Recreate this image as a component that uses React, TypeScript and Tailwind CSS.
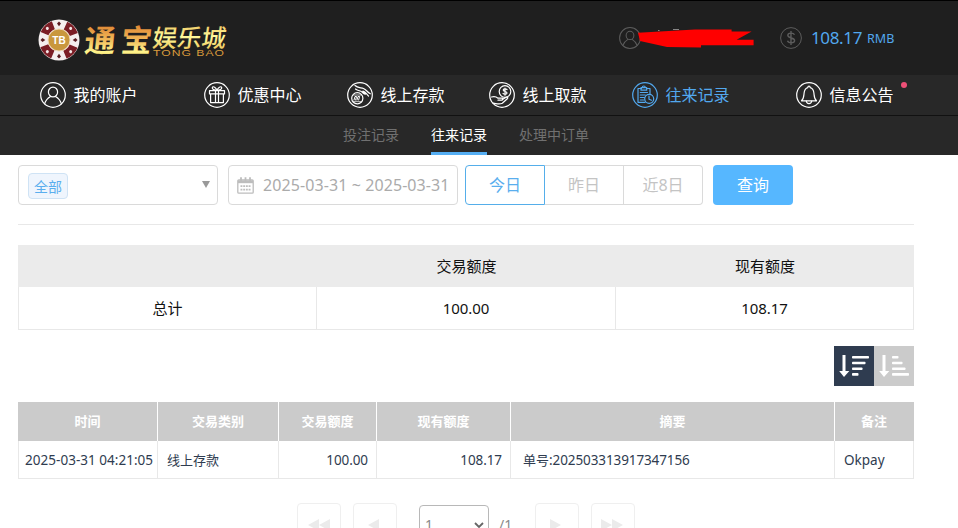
import React, { useState } from "react";

const Ring = ({ children }: { children: React.ReactNode }) => (
  <svg
    width="26"
    height="26"
    viewBox="0 0 26 26"
    fill="none"
    stroke="currentColor"
    strokeWidth="1.2"
    strokeLinecap="round"
    strokeLinejoin="round"
    className="shrink-0"
  >
    <circle cx="13" cy="13" r="12.3" />
    {children}
  </svg>
);

const UserIcon = () => (
  <Ring>
    <ellipse cx="13" cy="10" rx="4.6" ry="4.9" />
    <path d="M4.6 21.8c1-3.6 3-5.4 5.9-7.2M21.4 21.8c-1-3.6-3-5.4-5.9-7.2" />
  </Ring>
);

const GiftIcon = () => (
  <Ring>
    <path d="M5.5 8.7h15v3.2h-15zM6.6 12v8.6h12.8V12M11.5 8.7v11.9M14.5 8.7v11.9" />
    <path d="M12.8 8.4C11 8.2 7.8 7.6 8.3 5.5c.7-2 4 .2 4.5 2.9M13.2 8.4c1.8-.2 5-.8 4.5-2.9-.7-2-4 .2-4.5 2.9" />
  </Ring>
);

const DepositIcon = () => (
  <Ring>
    <circle cx="10.300" cy="16.300" r="5.600" />
    <path d="M7 18l1-3.500h1.600l-1 3.500M10 18l1-3.500h1.600l-1 3.500" strokeWidth="1" />
    <path d="M6.500 13h7.600M6.500 19.600h7.600" strokeWidth=".7" />
    <path d="M8 3.500c2.500 2.500 6 2 8.500 3 3 1.200 3.500 3.600 6.800 5.300" />
    <path d="M8.500 7c2.500 2 5 1.500 6.300 2.800 1.500 1.400 1.600 2.600 3.600 2.300l-2.500-3c3 .5 3.500 3.200 5.600 4.900" />
  </Ring>
);

const WithdrawIcon = () => (
  <Ring>
    <circle cx="16" cy="9.5" r="5.8" />
    <path d="M18 7.500c-1-1-3.800-1-3.800.6 0 1.800 3.800 1 3.800 2.900 0 1.500-3 1.500-4 .4M16 6v7.200" />
    <path d="M2.500 15c2.500-.7 4.500-.6 6.500 1.200h4c1.500.3 1 2-.4 2H9M13.500 17.500l3.600-2.300c1.500-.7 2.300.6 1.200 1.500l-5 4.500c-3 1.500-6 .2-9.300 0" />
  </Ring>
);

const RecordIcon = () => (
  <Ring>
    <path d="M9.500 6.500H6v13.800h7M14.500 6.500H18v5.300M9 5.600h5.700v2.600H9zM10.300 5.500c0-2 3-2 3 0M8.300 10.500h7.200M8.300 13h5M8.300 15.500h4M8.300 18h3.500" />
    <circle cx="17.200" cy="16.800" r="4.500" />
    <path d="M17 14v3.200l2.500 1" />
  </Ring>
);

const BellIcon = () => (
  <Ring>
    <path d="M5.500 18.800c2.400-2 2.200-4.600 2.600-7.800.3-3 1.900-5 3.700-5.400.1-2.100 2.300-2.100 2.400 0 1.800.4 3.400 2.400 3.700 5.400.4 3.200.2 5.800 2.600 7.800z" />
    <path d="M10.300 19c.3 3.400 5.100 3.400 5.400 0" />
  </Ring>
);

const CalendarIcon = () => (
  <svg width="17" height="17" viewBox="0 0 17 17" fill="none" stroke="#bdbdbd">
    <rect x=".8" y="2.800" width="15.400" height="13.400" rx="1" strokeWidth="1.300" />
    <path d="M1 4.700h15" strokeWidth="3" />
    <path d="M4 .3v4M8.500 .3v4M13 .3v4" strokeWidth="1.800" />
    <path d="M3.500 9.200h10M3.500 12.600h10" strokeWidth="1.800" strokeDasharray="1.900 .8" />
  </svg>
);

const SortIcon = ({ widths }: { widths: number[] }) => (
  <svg width="30" height="24" viewBox="0 0 30 24" fill="#fff">
    <path d="M3.500 1h3v16h3.800L5 23 .2 17h3.300z" />
    {widths.map((w, i) => (
      <rect key={i} x="13" y={2 + i * 5.700} width={w} height="2.600" rx=".8" />
    ))}
  </svg>
);

const Logo = () => (
  <svg width="200" height="50" viewBox="0 0 200 50">
    <defs>
      <linearGradient id="gold" x1="0" y1="0" x2="0" y2="1">
        <stop offset="0.2" stopColor="#df8734" />
        <stop offset="0.5" stopColor="#f0b455" />
        <stop offset="0.8" stopColor="#fff58c" />
        <stop offset="1" stopColor="#d59b32" />
      </linearGradient>
      <linearGradient id="pale" x1="0" y1="0" x2="0" y2="1">
        <stop offset="0" stopColor="#e6ad45" />
        <stop offset="0.5" stopColor="#fffb9c" />
        <stop offset="1" stopColor="#e5b544" />
      </linearGradient>
    </defs>
    <circle cx="24" cy="25" r="20.500" fill="#f4eeee" />
    <circle
      cx="24"
      cy="25"
      r="15.800"
      fill="none"
      stroke="#7b1d25"
      strokeWidth="8.500"
      strokeDasharray="12.409 12.409"
      strokeDashoffset="-6.200"
    />
    <circle cx="24" cy="25" r="11" fill="#c9973d" stroke="#eed8ba" />
    {[0, 90, 180, 270].map((a) => (
      <path key={a} d="M24 6.500l2 2-2 2.800-2-2.800z" fill="#5a1b20" transform={`rotate(${a} 24 25)`} />
    ))}
    {[45, 135, 225, 315].map((a) => (
      <circle key={a} cx="24" cy="8.500" r="1.500" fill="#f5e8e8" transform={`rotate(${a} 24 25)`} />
    ))}
    <text x="24" y="28.500" textAnchor="middle" fontSize="10" fontWeight="700" fill="#fff" fontFamily="Liberation Sans, sans-serif">
      TB
    </text>
    <g fontFamily="'Noto Sans CJK SC', sans-serif" fontWeight="700">
      <text x="52.500" y="37" fontSize="31" fill="url(#gold)" transform="skewX(-6)">通</text>
      <text x="89" y="37" fontSize="31" fill="url(#gold)" transform="skewX(-6)">宝</text>
      <text x="121" y="32.500" fontSize="24.500" fontWeight="500" fill="url(#pale)" transform="skewX(-8)">娱乐城</text>
    </g>
    <text
      x="118"
      y="41"
      fontSize="9.500"
      fill="#d89a3c"
      fontFamily="Liberation Sans, sans-serif"
      textLength="72"
      lengthAdjust="spacingAndGlyphs"
      letterSpacing=".8"
    >
      TONG BAO
    </text>
  </svg>
);

const menu = [
  { label: "我的账户", icon: <UserIcon /> },
  { label: "优惠中心", icon: <GiftIcon /> },
  { label: "线上存款", icon: <DepositIcon /> },
  { label: "线上取款", icon: <WithdrawIcon /> },
  { label: "往来记录", icon: <RecordIcon />, active: true },
  { label: "信息公告", icon: <BellIcon />, dot: true },
];

const tabs = ["投注记录", "往来记录", "处理中订单"];
const columns = ["时间", "交易类别", "交易额度", "现有额度", "摘要", "备注"];

function Header() {
  return (
    <header className="border-t border-black bg-[#1f1f1f] h-[75px] flex">
      <div className="ml-[35px] mt-[14px] w-[584px]">
        <Logo />
      </div>
      <div className="relative flex items-center w-[161px] h-[74px] text-[#5c5c5c]">
        <div className="w-[22px] [&>svg]:w-[22px] [&>svg]:h-[22px]">
          <UserIcon />
        </div>
        <svg className="absolute left-[18px] top-[27px]" width="118" height="20" viewBox="0 0 118 20">
          <path d="M21 2.500h1.500M36 1.500h6" stroke="#888" />
          <path d="M1 4.700L58 1.500h36.600v2.100h20L99.600 11.700h17v5.600H64v2.200L30 19 3 13z" fill="#f00" />
        </svg>
      </div>
      <div className="flex items-center h-[74px] text-[#5c5c5c]">
        <svg width="22" height="22" viewBox="0 0 22 22" fill="none" stroke="currentColor">
          <circle cx="11" cy="11" r="10.400" />
          <path d="M14.500 7.800C13.500 5.500 7.800 5.500 7.800 8.300c0 3.400 6.800 2 6.800 5.300 0 3-6.300 2.800-7.100.2M11 4v14" strokeWidth="1.400" />
        </svg>
        <span className="ml-[9px] text-[17px] tracking-[-0.35px] text-[#52a8ee]">108.17</span>
        <span className="ml-[5px] mt-[3px] text-[12.500px] text-[#52a8ee]">RMB</span>
      </div>
    </header>
  );
}

function PageButton({ children }: { children: React.ReactNode }) {
  return (
    <button className="w-11 h-11 border border-[#efefef] rounded flex items-center justify-center">
      <svg width="24" height="14" viewBox="0 0 24 14" fill="#ebebeb">
        {children}
      </svg>
    </button>
  );
}

function App() {
  const [tab, setTab] = useState(1);

  return (
    <div className="h-[528px] overflow-hidden bg-white font-['Noto_Sans','Noto_Sans_CJK_SC',sans-serif]">
      <Header />
      <nav className="h-[41px] bg-[#282828] border-b border-[#111] pl-10 grid grid-cols-[164px_143px_142px_143px_164px_110px] items-center text-base">
        {menu.map((item) => (
          <a
            key={item.label}
            className={item.active ? "relative flex items-center text-[#52a8ee]" : "relative flex items-center text-white"}
          >
            {item.icon}
            <span className="ml-[7.500px]">{item.label}</span>
            {item.dot && <span className="absolute left-[105px] top-0 w-1.5 h-1.5 rounded-full bg-[#ee5077]" />}
          </a>
        ))}
      </nav>
      <div className="h-[39px] bg-[#282828] pl-[343px] flex gap-8 text-sm">
        {tabs.map((name, i) => (
          <button
            key={name}
            onClick={() => setTab(i)}
            className={
              i === tab
                ? "pt-0.5 text-white border-b-[3px] border-[#55aef3]"
                : "pt-0.5 text-[#707070] border-b-[3px] border-transparent"
            }
          >
            {name}
          </button>
        ))}
      </div>

      <main className="ml-[18px] w-[896px] pt-2.5">
        <div className="flex h-[60px] pb-5 border-b border-[#e8e8e8] text-base">
          <div className="w-[200px] h-10 border border-[#dadada] rounded flex items-center justify-between pl-[9px] pr-[7px]">
            <span className="mt-px w-10 h-[26px] border border-[#cfe3f5] bg-[#eff5fd] rounded-sm text-sm leading-[26px] text-center text-[#5aaeee]">
              全部
            </span>
            <svg width="8" height="7" viewBox="0 0 8 7" className="mb-px">
              <path d="M0 0h8L4 7z" fill="#999" />
            </svg>
          </div>
          <div className="ml-2.5 w-[230px] h-10 border border-[#dadada] rounded flex items-center pl-2 text-[#ababab]">
            <CalendarIcon />
            <span className="ml-[9px] whitespace-nowrap tracking-[0.09px]">2025-03-31 ~ 2025-03-31</span>
          </div>
          <div className="ml-[7px] flex h-10 text-[#c4c4c4]">
            <button className="w-20 border border-[#55aeea] rounded-l text-[#5aaeee]">今日</button>
            <button className="w-[79px] border-y border-r border-[#dadada]">昨日</button>
            <button className="w-[79px] border-y border-r border-[#dadada] rounded-r">近8日</button>
          </div>
          <button className="ml-2.5 w-20 h-10 bg-[#56b7ff] rounded text-white">查询</button>
        </div>

        <table className="mt-5 w-full table-fixed border-separate border-spacing-0 text-[15px] text-center text-[#111]">
          <thead className="bg-[#ebebeb]">
            <tr className="h-[42px]">
              <th className="w-[299px]" />
              <th className="w-[299px] font-normal p-0">交易额度</th>
              <th className="font-normal p-0">现有额度</th>
            </tr>
          </thead>
          <tbody>
            <tr className="h-[43px]">
              <td className="border-x border-b border-[#e8e8e8] p-0">总计</td>
              <td className="border-r border-b border-[#e8e8e8] p-0 tracking-[-0.1px]">100.00</td>
              <td className="border-r border-b border-[#e8e8e8] p-0 tracking-[-0.1px]">108.17</td>
            </tr>
          </tbody>
        </table>

        <div className="mt-4 flex justify-end">
          <button className="w-10 h-10 bg-[#2f3c50] flex items-center justify-center">
            <SortIcon widths={[17, 13.500, 10.500, 6.500]} />
          </button>
          <button className="w-10 h-10 bg-[#cbcbcb] flex items-center justify-center">
            <SortIcon widths={[6.500, 10.500, 13.500, 17]} />
          </button>
        </div>

        <table className="mt-4 w-full table-fixed border-separate border-spacing-0 text-[13.500px] text-[#2f3c50]">
          <colgroup>
            <col className="w-[140px]" />
            <col className="w-[121px]" />
            <col className="w-[98px]" />
            <col className="w-[134px]" />
            <col className="w-[324px]" />
            <col className="w-[79px]" />
          </colgroup>
          <thead>
            <tr className="h-[39px] bg-[#cbcbcb] text-[13px] text-white">
              {columns.map((name) => (
                <th key={name} className="p-0 border-r border-white last:border-[#cbcbcb] font-bold">
                  {name}
                </th>
              ))}
            </tr>
          </thead>
          <tbody>
            <tr className="h-[38px] whitespace-nowrap [&>td]:border-r [&>td]:border-b [&>td]:border-[#e8e8e8] [&>td]:pt-0.5 [&>td]:pb-0">
              <td className="border-l pl-1.5 pr-0 tracking-[0.03px]">2025-03-31 04:21:05</td>
              <td className="pl-[9px] text-[13px]">线上存款</td>
              <td className="pr-2 text-right tracking-[-0.1px]">100.00</td>
              <td className="pr-2 text-right tracking-[-0.1px]">108.17</td>
              <td className="pl-3">
                <span className="text-[13px]">单号</span>
                <span className="tracking-[-0.1px]">:202503313917347156</span>
              </td>
              <td className="pl-[9px]">Okpay</td>
            </tr>
          </tbody>
        </table>

        <div className="mt-6 ml-[279px] flex text-sm text-[#8a8a8a]">
          <PageButton>
            <path d="M12 1v12L1 7zM23 1v12L12 7z" />
          </PageButton>
          <div className="ml-3">
            <PageButton>
              <path d="M16 1v12L5 7z" />
            </PageButton>
          </div>
          <div className="ml-[22px] mt-0.5 w-[70px] h-10 border border-[#b8b8b8] rounded flex items-center justify-between pl-[5px] pr-1">
            <span>1</span>
            <svg width="10" height="7" viewBox="0 0 10 7" fill="none" stroke="#666" strokeWidth="1.800">
              <path d="M1 1l4 4 4-4" />
            </svg>
          </div>
          <span className="ml-2.5 mt-3">/1</span>
          <div className="ml-[23px]">
            <PageButton>
              <path d="M5 1v12l11-6z" />
            </PageButton>
          </div>
          <div className="ml-3">
            <PageButton>
              <path d="M0 1v12l11-6zM11 1v12l11-6z" />
            </PageButton>
          </div>
        </div>
      </main>
    </div>
  );
}

export default App;
